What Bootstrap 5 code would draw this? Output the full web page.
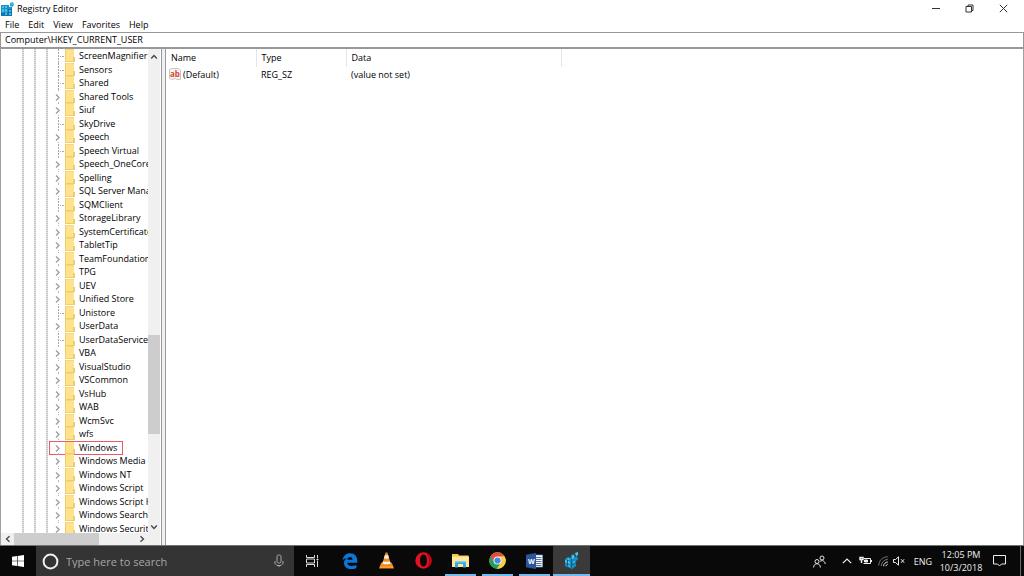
<!DOCTYPE html>
<html lang="en">
<head>
<meta charset="utf-8">
<meta name="viewport" content="width=device-width, initial-scale=1">
<title>Registry Editor</title>
<link href="https://cdn.jsdelivr.net/npm/bootstrap@5.3.0/dist/css/bootstrap.min.css" rel="stylesheet">
<style>
body { font-family: "Open Sans", "Noto Sans", sans-serif; font-size: 9px; line-height: 13px; color: #000; background: #fff; }
button, input { font: inherit; color: inherit; background: none; border: 0; padding: 0; border-radius: 0; }
svg { display: block; flex: none; }
.title-bar { height: 17px; padding-left: 1px; }
.title-text { margin-left: 3px; }
.caption-btn { width: 34px; height: 17px; display: flex; align-items: center; justify-content: center; }
.menu-bar { height: 15px; gap: 9px; padding-left: 5px; }
.address { height: 17px; border: 1px solid #979799; border-bottom: 2px solid #97989c; padding-left: 4px; }
.panes { border-left: 1px solid #a0a0a4; border-right: 1px solid #a0a0a4; min-height: 0; }
.tree-pane { width: 161px; border-right: 1px solid #97989c; padding-right: 1px; }
.splitter { width: 4px; background: #f0f0f0; border-right: 1px solid #97989c; }
.tree-list { padding-left: 52px; flex: 1 1 0; min-width: 0; overflow: hidden; list-style: none; margin: 0; }
.guides { left: 21px; width: 26px; }
.dots { width: 2px; background: repeating-linear-gradient(#c6c6c6 0 1px, #e2e2e2 1px 2px); }
.tree-item { height: 14px; white-space: nowrap; position: relative; display: flex; }
.tree-item:nth-child(even) { height: 13px; }
.tree-item .folder { margin-right: 4px; }
.twist { width: 12px; height: 14px; flex: none; }
.marked::after { content: ""; position: absolute; left: -4px; top: 0; width: 74px; height: 14px; border: 1px solid #ee5a64; }
.bar-v { width: 12px; background: #f0f0f0; padding-top: 2px; }
.bar-h { height: 12px; background: #f0f0f0; padding-left: 1px; }
.bar-btn { width: 12px; height: 12px; display: flex; align-items: center; justify-content: center; flex: none; }
.thumb { background: #cdcdcd; }
.corner { width: 12px; }
.values { table-layout: fixed; width: 396px; border-collapse: collapse; }
.values th { font-weight: 400; height: 18px; border-right: 1px solid #e5e5e5; padding: 0 0 0 5px; }
.values td { height: 15px; padding: 0 0 0 5px; }
.values td:first-child { padding-left: 3px; }
.value-name { gap: 2px; }
.task-bar { height: 31px; background: #090909; border-top: 1px solid #6f7474; color: #f0f0f0; }
.start { width: 36px; }
.search { width: 258px; background: #343434; padding: 0 10px 0 6px; }
.search input { font-size: 11px; color: #b4b4b4; outline: 0; margin-left: 7px; min-width: 0; flex: 1; }
.search input::placeholder { color: #a6a6a6; opacity: 1; }
.task { width: 37px; display: flex; align-items: center; justify-content: center; border-bottom: 2px solid transparent; padding-top: 1px; }
.start, .tray-btn { display: flex; align-items: center; justify-content: center; }
.running { position: relative; }
.running::after { content: ""; position: absolute; left: 3px; right: 3px; bottom: -2px; height: 2px; background: #76b9ed; }
.active-task { background: #3a3a3a; }
.active-task::after { left: 0; right: 0; }
.clock { width: 50px; text-align: center; }
.tray-btn { width: 18px; }
.people { width: 28px; margin-right: 5px; }
.volume { width: 14px; }
.lang { width: 26px; }
.notify { width: 27px; margin-right: 7px; }
.peek { width: 4px; border-left: 1px solid #6a6a6a; }
</style>
</head>
<body>
<svg width="0" height="0" class="position-absolute" aria-hidden="true">
  <symbol id="i-folder" viewBox="0 0 10 13"><path fill="#ffe28c" d="M0 0h9v8l1 1v4H0z"/><path fill="#f0cd6a" d="M0 12h10v1H0zM8 8h2v5H8zM0 0h1v13H0z"/><path fill="#f6d87c" d="M1 0h8v1H1z"/></symbol>
  <symbol id="i-twist" viewBox="0 0 12 14"><path d="M3 4.500l3 3-3 3" fill="none" stroke="#a0a0a0" stroke-width="1.400"/><path fill="#b4b4b4" d="M5 0h1v1H5zM5 12h1v1H5z"/></symbol>
  <symbol id="i-leaf" viewBox="0 0 12 14"><path fill="#a8a8a8" d="M5 0h1v2H5zM5 3h1v2H5zM5 6h1v2H5zM5 9h1v2H5zM5 12h1v2H5zM7 7h1v1H7zM9 7h2v1H9z"/></symbol>
</svg>

<div class="vh-100 d-flex flex-column overflow-hidden">
  <header class="title-bar d-flex align-items-center">
    <svg width="13" height="14" viewBox="0 0 13 14"><path fill="#1692c9" d="M0 3h8v2h3v9H0z"/><path fill="#42c2ee" d="M1 4h2v2H1zM4 4h2v2H4zM1 7h2v3H1zM4 7h2v3H4z"/><path fill="#0c76ad" d="M7 7h4v7H7zM0 11h11v3H0z"/><path fill="#49b9e4" d="M8 8h2v2H8zM4 11h2v2H4zM8 11h2v2H8z"/><path fill="#239fd4" d="M9 1l3-1 1 3-2 2-2-1z"/><path fill="#8edcf7" d="M10 1l2 1-1 1z"/></svg>
    <span class="title-text">Registry Editor</span>
    <div class="d-flex ms-auto">
      <button class="caption-btn" aria-label="Minimize"><svg width="9" height="9" viewBox="0 0 9 9"><path d="M1 4.500h8" stroke="#333"/></svg></button>
      <button class="caption-btn" aria-label="Restore"><svg width="9" height="9" viewBox="0 0 9 9"><path d="M1 2.500h5.500v5.500H1zM3 2.500V1h5v5.500H6.500" fill="none" stroke="#333"/></svg></button>
      <button class="caption-btn me-1" aria-label="Close"><svg width="9" height="9" viewBox="0 0 9 9"><path d="M.8.800l7.400 7.400M8.200.800L.8 8.200" stroke="#333"/></svg></button>
    </div>
  </header>
  <nav class="menu-bar d-flex align-items-center" aria-label="Menu">
    <button>File</button><button>Edit</button><button>View</button><button>Favorites</button><button>Help</button>
  </nav>
  <input class="address w-100" aria-label="Address" value="Computer\HKEY_CURRENT_USER">

  <main class="panes d-flex flex-grow-1">
    <section class="tree-pane d-flex flex-column flex-shrink-0" aria-label="Keys">
      <div class="d-flex flex-grow-1 position-relative overflow-hidden">
        <div class="guides position-absolute h-100 d-flex justify-content-between"><i class="dots"></i><i class="dots"></i><i class="dots"></i></div>
        <ul class="tree-list" id="tree"></ul>
        <div class="bar-v d-flex flex-column">
          <button class="bar-btn" aria-label="Scroll up"><svg width="8" height="6" viewBox="0 0 8 6"><path d="M1.200 4.500L4 1.500l2.800 3" fill="none" stroke="#444" stroke-width="1.300"/></svg></button>
          <div style="flex:595"></div><div class="thumb" style="flex:214"></div><div style="flex:191"></div>
          <button class="bar-btn" aria-label="Scroll down"><svg width="8" height="6" viewBox="0 0 8 6"><path d="M1.200 1.500L4 4.500l2.800-3" fill="none" stroke="#444" stroke-width="1.300"/></svg></button>
        </div>
      </div>
      <div class="bar-h d-flex">
        <button class="bar-btn" aria-label="Scroll left"><svg width="6" height="8" viewBox="0 0 6 8"><path d="M4.500 1.200L1.500 4l3 2.800" fill="none" stroke="#444" stroke-width="1.300"/></svg></button>
        <div class="thumb" style="flex:70"></div><div style="flex:30"></div>
        <button class="bar-btn" aria-label="Scroll right"><svg width="6" height="8" viewBox="0 0 6 8"><path d="M1.500 1.200L4.500 4l-3 2.800" fill="none" stroke="#444" stroke-width="1.300"/></svg></button>
        <div class="corner"></div>
      </div>
    </section>
    <div class="splitter flex-shrink-0"></div>
    <section class="flex-grow-1" aria-label="Values">
      <table class="values">
        <colgroup><col style="width:90px"><col style="width:90px"><col></colgroup>
        <thead><tr><th scope="col">Name</th><th scope="col">Type</th><th scope="col">Data</th></tr></thead>
        <tbody><tr>
          <td><div class="value-name d-flex align-items-center"><svg width="12" height="12" viewBox="0 0 12 12"><path d="M.5 1.500L3 .500h6l2.500 2v9H8l-2-1-3 1-2.500-1z" fill="#f7f7f7" stroke="#c6c6c6"/><text x="1" y="8.500" font-size="8" font-weight="700" fill="#d8452c">ab</text></svg><span>(Default)</span></div></td>
          <td>REG_SZ</td><td>(value not set)</td>
        </tr></tbody>
      </table>
    </section>
  </main>

  <footer class="task-bar d-flex flex-shrink-0">
    <button class="start" aria-label="Start"><svg width="12" height="12" viewBox="0 0 12 12"><path fill="#fff" d="M0 1.700l5-.7v4.700H0zM5.600.900L12 0v5.700H5.600zM0 6.300h5V11l-5-.7zM5.600 6.300H12V12l-6.400-.9z"/></svg></button>
    <div class="search d-flex align-items-center">
      <svg width="17" height="17" viewBox="0 0 17 17"><circle cx="8.500" cy="8.500" r="6.900" fill="none" stroke="#eee" stroke-width="2"/></svg>
      <input type="text" placeholder="Type here to search" aria-label="Search">
      <svg width="10" height="14" viewBox="0 0 10 14" fill="none" stroke="#aaa"><rect x="3" y="1" width="4" height="8" rx="1.500"/><path d="M1 7v2.500l2 2h4l2-2V7M5 11.500V13"/></svg>
    </div>
    <button class="task" aria-label="Task view"><svg width="13" height="12" viewBox="0 0 13 12" fill="none" stroke="#ddd"><path d="M.5 0v2.500h8V0M.5 12V9.500h8V12M.5 4h8v4h-8zM11.500 0v3M11.500 6v6"/><path fill="#fff" d="M11 4h1v1h-1z"/></svg></button>
    <button class="task" aria-label="Edge"><svg width="16" height="16" viewBox="0 0 16 16"><path fill="#0b78d7" d="M.5 7.500C1.200 3 4 .300 8 .300c4.900 0 7.300 3.500 7.300 7.900v1.500H5.300c.1 2.200 2 3.200 4.500 3.200 1.800 0 3.200-.4 4.600-1.200v3.200c-1.500.8-3.200 1.200-5.300 1.200-4.300 0-7.100-2.300-7.100-6 0-2.300 1.200-4.300 3.300-5.300C3.100 5.200 1.600 6 .5 7.500zM5.300 6.700h5.300c0-1.700-.9-2.700-2.500-2.700-1.500 0-2.500 1-2.800 2.700z"/></svg></button>
    <button class="task" aria-label="VLC"><svg width="15" height="17" viewBox="0 0 16 17"><path fill="#f28c18" d="M2.300 11h11.400L16 17H0z"/><path fill="#ffb04a" d="M1 15h14v1H1z"/><path fill="#f18a19" d="M7 0h2l3.700 12.500q-4.700 2-9.400 0z"/><path fill="#f3f3f3" d="M6.200 3h3.600l.9 3q-2.700 1-5.400 0zM4.300 9.200q3.700 1.300 7.400 0l.8 2.500q-4.500 1.800-9 0z"/></svg></button>
    <button class="task" aria-label="Opera"><svg width="17" height="17" viewBox="0 0 17 17"><path fill="#e3101f" fill-rule="evenodd" d="M8.500.300a8.200 8.200 0 110 16.400 8.200 8.200 0 010-16.400zM8.500 2.500C6.300 2.500 5 5.200 5 8.500s1.300 6 3.500 6 3.500-2.700 3.500-6-1.300-6-3.500-6z"/><path fill="#b40614" d="M11 1c3.600 1.200 5.700 4.100 5.700 7.500s-2.100 6.300-5.700 7.500c4-4 4-11 0-15z"/></svg></button>
    <button class="task running" aria-label="File Explorer"><svg width="17" height="15" viewBox="0 0 17 15"><path fill="#f2c84f" d="M0 1h6l1 1.500h9.500V4H0z"/><path fill="#ffe79b" d="M0 3.500h17V14H0z"/><path fill="#36a9df" d="M3 8h11v6.500h-3V11H6v3.500H3z"/><path fill="#79d0f3" d="M3 8h11v1.500H3z"/></svg></button>
    <button class="task running" aria-label="Chrome"><svg width="17" height="17" viewBox="0 0 17 17"><circle cx="8.500" cy="8.500" r="8.200" fill="#f9cf43"/><path fill="#dc4c3f" d="M1.400 4.400A8.200 8.200 0 0115.600 4.400H8.500L5 10.500z"/><path fill="#1e9f5a" d="M1.400 4.400a8.200 8.200 0 006.700 12.300l3.900-6.200H5z"/><path fill="#f9cf43" d="M15.600 4.400A8.200 8.200 0 018.100 16.700L12 10.500 11 4.400z"/><circle cx="8.500" cy="8.500" r="4" fill="#f4f4f4"/><circle cx="8.500" cy="8.500" r="3.100" fill="#4a86ea"/></svg></button>
    <button class="task running" aria-label="Word"><svg width="17" height="16" viewBox="0 0 17 16"><path fill="#f4f6fa" stroke="#8aa2cf" stroke-width=".6" d="M9 2h7.500v12H9z"/><path stroke="#2b5797" d="M10 4.500h5.500M10 6.500h5.500M10 8.500h5.500M10 10.500h5.500M10 12.500h5.500" stroke-width=".8"/><path fill="#2b579a" d="M0 1.800L10 0v16L0 14.200z"/><text x="2" y="10.500" font-size="7" font-weight="700" fill="#fff">W</text></svg></button>
    <button class="task running active-task" aria-label="Registry Editor"><svg width="15" height="17" viewBox="0 0 15 17"><path fill="#168fc0" d="M1 7l3-2 3 1V3l3-1 1 3 2-1 1 3-2 2v5l-4 3-7-3z"/><path fill="#4fc7ee" d="M1 8l2 1v2l-2-1zM4 9l2 1v2l-2-1zM8 4l2-1v3L8 7zM4 6l2 1-1 1-2-1zM9 10l2-1v2l-2 1zM4 13l2 1v1l-2-1zM11 1l3-1v3l-2 1z"/><path fill="#0b5f8a" d="M7 7h1v9H7zM3 8h1v6H3zM8 12l4-2v1l-4 2z"/></svg></button>

    <div class="d-flex ms-auto">
      <button class="tray-btn people" aria-label="People"><svg width="13" height="13" viewBox="0 0 13 13" fill="none" stroke="#e4e4e4"><circle cx="9" cy="3" r="2"/><circle cx="4" cy="6.500" r="2"/><path d="M.6 12.500c0-5 6.800-5 6.800 0M7 6.400c2.300-1.700 5-.4 5.200 2.600"/></svg></button>
      <button class="tray-btn" aria-label="Show hidden icons"><svg width="10" height="6" viewBox="0 0 10 6"><path d="M.8 5.200L5 1l4.200 4.200" fill="none" stroke="#eee" stroke-width="1.200"/></svg></button>
      <button class="tray-btn" aria-label="Battery"><svg width="13" height="10" viewBox="0 0 13 10" fill="none" stroke="#eee"><path d="M5 2.500h6.500v5H4.500M12.500 4v2"/><path d="M5.500 4h3v2h-3z" fill="#eee"/><path d="M1 1.500h3v2H1zM2.500 3.500v3.500" stroke-width="1.500"/></svg></button>
      <button class="tray-btn" aria-label="Network"><svg width="11" height="11" viewBox="0 0 11 11" fill="none"><path d="M.7 9.500C1 4.500 4.500 1 9.700.700M3.200 10C3.500 6.500 6.200 3.600 9.800 3.300" stroke="#777"/><path d="M5.500 10.200c.2-2.200 1.800-4 4.300-4.300M8 10.300c0-1 .8-2 1.800-2.100" stroke="#ddd"/></svg></button>
      <button class="tray-btn volume" aria-label="Volume"><svg width="12" height="10" viewBox="0 0 12 10" fill="none" stroke="#eee"><path d="M.5 3.500h2L5.500.800v8.400l-3-2.700h-2zM8 3.200l3.200 3.600M11.200 3.200L8 6.800"/></svg></button>
      <button class="tray-btn lang ms-1">ENG</button>
      <button class="clock d-flex flex-column justify-content-center"><span class="w-100">12:05 PM</span><span class="w-100">10/3/2018</span></button>
      <button class="tray-btn notify" aria-label="Notifications"><svg width="13" height="12" viewBox="0 0 13 12"><path d="M.5.500h12v8.500h-4L6.500 11l-2-2h-4z" fill="none" stroke="#eee"/></svg></button>
      <div class="peek"></div>
    </div>
  </footer>
</div>

<script src="https://cdn.jsdelivr.net/npm/bootstrap@5.3.0/dist/js/bootstrap.bundle.min.js"></script>
<script>
// Keys without subkeys start with "-".
const keys = ["-ScreenMagnifier","-Sensors","-Shared","Shared Tools","Siuf","-SkyDrive","Speech","-Speech Virtual","Speech_OneCore","Spelling","SQL Server Manag","-SQMClient","StorageLibrary","SystemCertificate","TabletTip","TeamFoundation","TPG","UEV","Unified Store","-Unistore","UserData","-UserDataService","VBA","VisualStudio","VSCommon","VsHub","WAB","WcmSvc","wfs","Windows","Windows Media","Windows NT","Windows Script","Windows Script H","Windows Search","Windows Security"];
document.getElementById("tree").innerHTML = keys.map(key => {
  const leaf = key[0] === "-", name = leaf ? key.slice(1) : key;
  const twist = leaf
    ? '<span class="twist"><svg width="12" height="14"><use href="#i-leaf"/></svg></span>'
    : `<button class="twist" aria-label="Expand ${name}"><svg width="12" height="14"><use href="#i-twist"/></svg></button>`;
  return `<li class="tree-item${name === "Windows" ? " marked" : ""}">${twist}<svg class="folder" width="10" height="13"><use href="#i-folder"/></svg><span>${name}</span></li>`;
}).join("");
</script>
</body>
</html>
